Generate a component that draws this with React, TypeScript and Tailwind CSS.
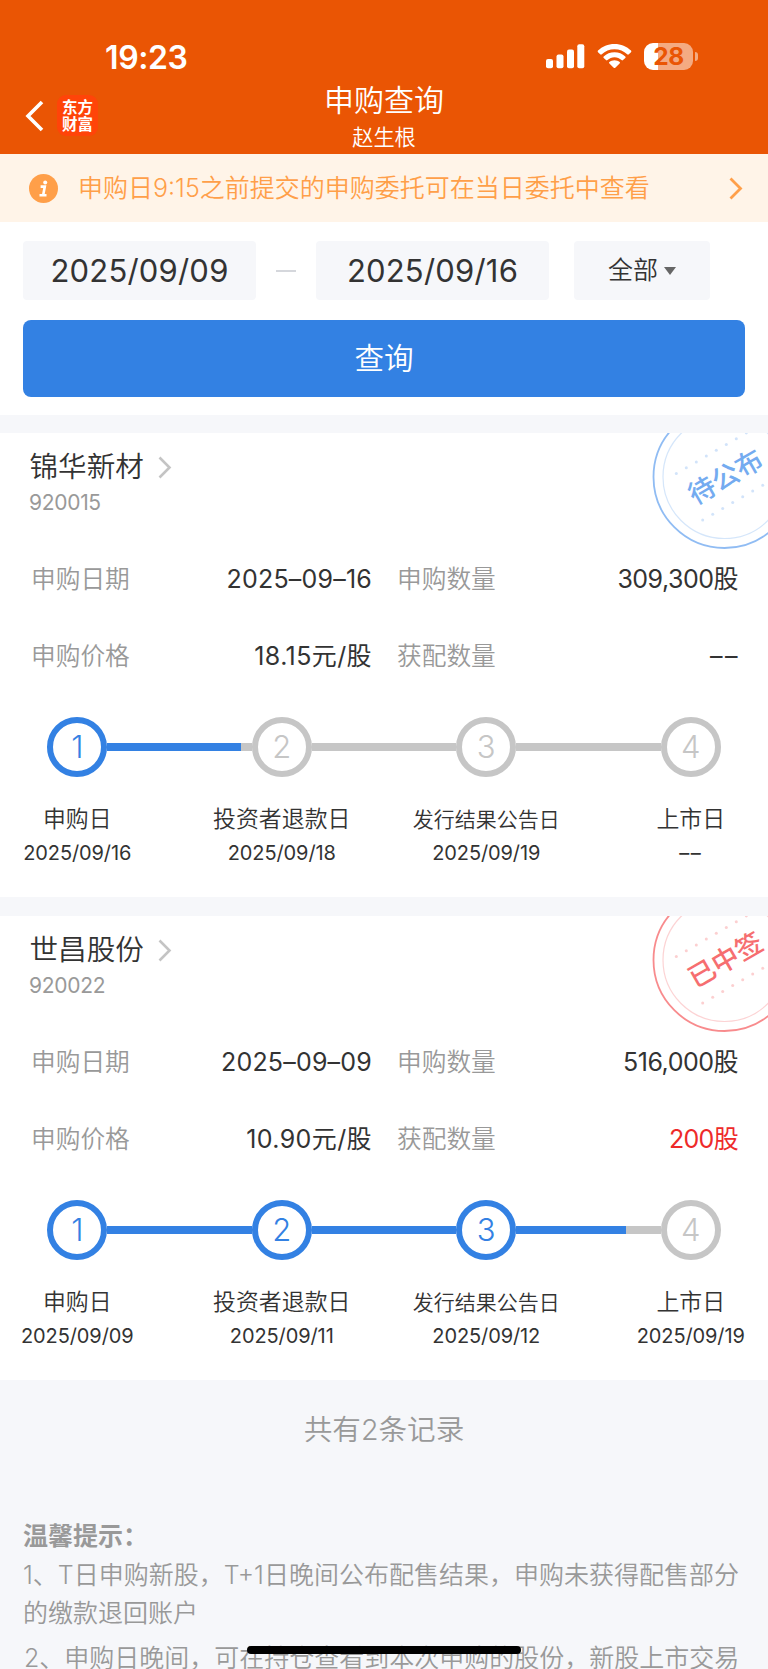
import clsx from 'clsx';
import React from 'react';

type Step = { label: string; date: string; small?: boolean };

type Subscription = {
  name: string;
  code: string;
  date: string;
  amount: string;
  price: string;
  allotted: string;
  won: boolean;
  stamp: string;
  activeSteps: number;
  steps: Step[];
};

const subscriptions: Subscription[] = [
  {
    name: '锦华新材',
    code: '920015',
    date: '2025–09–16',
    amount: '309,300股',
    price: '18.15元/股',
    allotted: '––',
    won: false,
    stamp: '待公布',
    activeSteps: 1,
    steps: [
      { label: '申购日', date: '2025/09/16' },
      { label: '投资者退款日', date: '2025/09/18' },
      { label: '发行结果公告日', date: '2025/09/19', small: true },
      { label: '上市日', date: '––' }
    ]
  },
  {
    name: '世昌股份',
    code: '920022',
    date: '2025–09–09',
    amount: '516,000股',
    price: '10.90元/股',
    allotted: '200股',
    won: true,
    stamp: '已中签',
    activeSteps: 3,
    steps: [
      { label: '申购日', date: '2025/09/09' },
      { label: '投资者退款日', date: '2025/09/11' },
      { label: '发行结果公告日', date: '2025/09/12', small: true },
      { label: '上市日', date: '2025/09/19' }
    ]
  }
];

const StatusBar = () => (
  <div className="flex h-[80px] items-start justify-between pt-[40px] pr-[70px] pl-[105px] text-white">
    <span className="text-[32px] leading-[35px] font-semibold tracking-[-0.4px]">19:23</span>
    <div className="flex items-start">
      <svg className="mt-[4px]" width="39" height="25" viewBox="0 0 39 25" fill="currentColor">
        <rect x="0" y="15" width="7" height="9.3" rx="2" />
        <rect x="10.5" y="10.5" width="7" height="13.8" rx="2" />
        <rect x="21" y="5.5" width="7" height="18.8" rx="2" />
        <rect x="31.3" y="0.3" width="7" height="24" rx="2" />
      </svg>
      <svg className="mt-[3px] ml-[12px]" width="35" height="26" viewBox="0 0 35 26" fill="currentColor">
        <path d="M17.5 1C11 1 5.200 3.500 1 7.600 .5 8.100 .5 8.700 1 9.200L3.200 11.300C3.700 11.800 4.300 11.800 4.800 11.300 8.100 8.100 12.600 6.200 17.500 6.200S26.900 8.100 30.200 11.300C30.700 11.800 31.300 11.800 31.800 11.300L34 9.200C34.500 8.700 34.500 8.100 34 7.600 29.800 3.500 24 1 17.500 1Z" />
        <path d="M17.500 9.200C13.300 9.200 9.500 10.800 6.700 13.400 6.200 13.900 6.200 14.500 6.700 15L9 17.100C9.400 17.500 10 17.500 10.500 17.100 12.400 15.400 14.800 14.300 17.500 14.300S22.600 15.400 24.500 17.100C25 17.500 25.600 17.500 26 17.100L28.300 15C28.800 14.500 28.800 13.900 28.300 13.400 25.500 10.800 21.700 9.200 17.500 9.200Z" />
        <path d="M17.500 17.200C15.500 17.200 13.700 17.900 12.400 19.100 11.900 19.500 11.900 20.100 12.400 20.600L16.700 24.700C17.200 25.200 17.800 25.200 18.300 24.700L22.600 20.600C23.100 20.100 23.100 19.500 22.600 19.100 21.300 17.900 19.500 17.200 17.500 17.200Z" />
      </svg>
      <div className="mt-[3px] ml-[12px] flex items-center gap-[2px]">
        <div className="flex h-[27px] w-[49px] items-center justify-center rounded-[9px] bg-[linear-gradient(90deg,#fff_0_14px,#f4aa82_14px)] text-[24.500px] leading-[27px] font-bold tracking-[-0.5px] text-[#ea5504]">
          28
        </div>
        <div className="h-[9px] w-[3px] rounded-r-full bg-[#f4aa82]" />
      </div>
    </div>
  </div>
);

const Header = () => (
  <header className="relative h-[154px] bg-[#ea5504] text-white">
    <StatusBar />
    <div className="grid grid-cols-[1fr_auto_1fr] pr-[25px] pl-[25px]">
      <div className="flex items-start gap-[13px] pt-[15px]">
        <svg className="mt-[5px]" width="19" height="32" viewBox="0 0 19 32" fill="none" stroke="currentColor" strokeWidth="3.600">
          <path d="M17 2 3 16l14 14" />
        </svg>
        <div className="h-[41px] w-[41px] rounded-[9px] bg-[#ff4409] pt-[4px] text-center text-[15.500px] leading-[17px] font-bold">
          <div>东方</div>
          <div>财富</div>
        </div>
      </div>
      <div className="text-center">
        <h1 className="text-[30px] leading-[40px]">申购查询</h1>
        <p className="mt-[2px] text-[21.200px] leading-[30px]">赵生根</p>
      </div>
      <div />
    </div>
  </header>
);

const Notice = () => (
  <div className="flex h-[68px] items-center bg-[#fff4e8] pr-[25px] pl-[29px] text-[#ff9f49]">
    <svg width="29" height="29" viewBox="0 0 29 29">
      <circle cx="14.500" cy="14.500" r="14.500" fill="currentColor" />
      <circle cx="16.200" cy="8.500" r="2" fill="#fff" />
      <path d="M11.600 12.600h4.200l-1.600 8.300M10.500 21.300h7" stroke="#fff" strokeWidth="2.600" fill="none" />
    </svg>
    <span className="ml-[20px] flex-1 text-[25px] leading-[36px] whitespace-nowrap">
      申购日9:15之前提交的申购委托可在当日委托中查看
    </span>
    <svg width="14" height="23" viewBox="0 0 14 23" fill="none" stroke="currentColor" strokeWidth="2.800">
      <path d="M1.500 1.500 11.500 11.500 1.500 21.500" />
    </svg>
  </div>
);

const DateBox = ({ children }: { children: React.ReactNode }) => (
  <div className="flex h-[59px] w-[233px] items-center justify-center rounded-[4px] bg-[#f6f7fa] pt-[2px] text-[31px] font-normal tracking-[0.2px] text-[#333]">
    {children}
  </div>
);

const Filters = () => (
  <section className="h-[193px] bg-white px-[23px] pt-[19px]">
    <div className="flex items-center">
      <DateBox>2025/09/09</DateBox>
      <div className="mx-[20px] h-[2px] w-[20px] bg-[#d5d7dc]" />
      <DateBox>2025/09/16</DateBox>
      <button className="ml-[25px] flex h-[59px] w-[136px] items-center justify-center gap-[6px] rounded-[4px] bg-[#f6f7fa] pt-[1px] text-[25px] text-[#333]">
        全部
        <svg width="12" height="8" viewBox="0 0 12 8" fill="#666">
          <path d="M0 0h12L6 8Z" />
        </svg>
      </button>
    </div>
    <button className="mt-[20px] h-[77px] w-full rounded-[8px] bg-[#3381e3] text-[29.600px] text-white">查询</button>
  </section>
);

const Stamp = ({ text, won }: { text: string; won: boolean }) => {
  const dots = [0, 1, 2, 3, 4, 5, 6, 7];
  return (
    <svg
      className={clsx('absolute top-0 right-0', won ? 'text-[#f66e70]' : 'text-[#74abf0]')}
      width="118"
      height="120"
      viewBox="0 0 118 120"
      fill="none"
    >
      <circle cx="74.500" cy="44" r="71" stroke="currentColor" strokeWidth="1.800" opacity="0.800" />
      <circle cx="74.500" cy="44" r="61.500" stroke="currentColor" strokeWidth="1.200" opacity="0.300" />
      {dots.map((i) => (
        <g key={i} fill="currentColor" opacity="0.320">
          <circle cx={26.3 + i * 10} cy={40.5 - i * 5.8} r="1.500" />
          <circle cx={52.7 + i * 10} cy={87 - i * 5.8} r="1.500" />
        </g>
      ))}
      <text
        x="75.500"
        y="53.500"
        textAnchor="middle"
        fontSize="27"
        fontWeight="500"
        fill="currentColor"
        transform="rotate(-30 75.500 44)"
      >
        {text}
      </text>
    </svg>
  );
};

type FieldProps = { label: string; value: string; className: string };

const Field = ({ label, value, className }: FieldProps) => (
  <div className="flex h-[77px] items-center justify-between">
    <span className="text-[24.700px] text-[#999]">{label}</span>
    <span className={clsx('text-[25px] font-normal', className)}>{value}</span>
  </div>
);

const StepTrack = ({ steps, active }: { steps: Step[]; active: number }) => (
  <div className="-mx-[25px] grid grid-cols-[204.500px_204.500px_204.500px_204.500px]">
    {steps.map((step, i) => {
      const done = i < active;
      const last = i === steps.length - 1;
      return (
        <div key={step.label} className="flex flex-col items-center">
          <div className="flex h-[60px] w-full items-center">
            <div className="flex h-[8px] flex-1">
              {i > 0 && (
                <>
                  <div className={clsx('flex-1', i <= active ? 'bg-[#3381e3]' : 'bg-[#c6c6c6]')} />
                  <div className={clsx(last ? 'w-[35px]' : 'w-[11px]', done ? 'bg-[#3381e3]' : 'bg-[#c6c6c6]')} />
                </>
              )}
            </div>
            <div
              className={clsx(
                'flex h-[60px] w-[60px] items-center justify-center rounded-full border-[6px] pb-[2px] text-[31px] leading-none',
                done ? 'border-[#3381e3] text-[#3381e3]' : 'border-[#c6c6c6] text-[#c6c6c6]'
              )}
            >
              {i + 1}
            </div>
            <div className={clsx('h-[8px] flex-1', !last && (done ? 'bg-[#3381e3]' : 'bg-[#c6c6c6]'))} />
          </div>
          <div
            className={clsx(
              'mt-[24px] h-[34px] whitespace-nowrap text-[#333]',
              step.small ? 'text-[21px] leading-[37px]' : 'text-[22.900px] leading-[36px]'
            )}
          >
            {step.label}
          </div>
          <div
            className={clsx(
              'text-[20px] leading-[36px] font-normal text-[#333]',
              step.date.startsWith('–') ? 'tracking-[1.500px]' : 'tracking-[-0.1px]'
            )}
          >
            {step.date}
          </div>
        </div>
      );
    })}
  </div>
);

const SubscriptionCard = ({ item }: { item: Subscription }) => (
  <article className="relative h-[464px] overflow-hidden bg-white">
    <Stamp text={item.stamp} won={item.won} />
    <div className="flex h-[69px] items-center gap-[14px] pl-[29.500px] text-[28.600px] text-[#333]">
      {item.name}
      <svg width="14" height="23" viewBox="0 0 14 23" fill="none" stroke="#c4c4c4" strokeWidth="2.600">
        <path d="M1.500 1.500 11.500 11.500 1.500 21.500" />
      </svg>
    </div>
    <div className="-mt-[12px] h-[24px] pl-[29px] text-[21px] leading-[25px] font-normal tracking-[-0.3px] text-[#999]">
      {item.code}
    </div>
    <div className="mt-[27px] grid grid-cols-2 gap-x-[25px] pr-[30px] pl-[31px]">
      <Field label="申购日期" value={item.date} className="tracking-[0.2px] text-[#333]" />
      <Field label="申购数量" value={item.amount} className="tracking-[-0.5px] text-[#333]" />
      <Field label="申购价格" value={item.price} className="tracking-[0.4px] text-[#333]" />
      <Field
        label="获配数量"
        value={item.allotted}
        className={item.won ? 'tracking-[-0.7px] text-[#ee2a2a]' : '-mr-[2px] tracking-[2.500px] text-[#333]'}
      />
    </div>
    <div className="mt-[22px]">
      <StepTrack steps={item.steps} active={item.activeSteps} />
    </div>
  </article>
);

const Tips = () => (
  <section className="px-[23px] text-[25px] leading-[38.500px] text-[#999]">
    <h2 className="font-semibold">温馨提示：</h2>
    <p className="whitespace-nowrap">
      1、T日申购新股，T+1日晚间公布配售结果，申购未获得配售部分
      <br />
      的缴款退回账户
    </p>
    <p className="mt-[6px] pl-px whitespace-nowrap">2、申购日晚间，可在持仓查看到本次申购的股份，新股上市交易</p>
  </section>
);

const App = () => (
  <div className="relative h-[1669px] w-[768px] overflow-hidden bg-[#f6f7fa] font-['Inter','Noto_Sans_CJK_SC',sans-serif] font-[350]">
    <Header />
    <Notice />
    <Filters />
    <main className="flex flex-col gap-[19px] pt-[18px]">
      {subscriptions.map((item) => (
        <SubscriptionCard key={item.code} item={item} />
      ))}
    </main>
    <p className="mt-[30px] mb-[67px] text-center text-[28.600px] leading-[40px] text-[#999]">共有2条记录</p>
    <Tips />
    <div className="absolute bottom-[15px] left-[247px] h-[8px] w-[274px] rounded-full bg-black" />
  </div>
);

export default App;
